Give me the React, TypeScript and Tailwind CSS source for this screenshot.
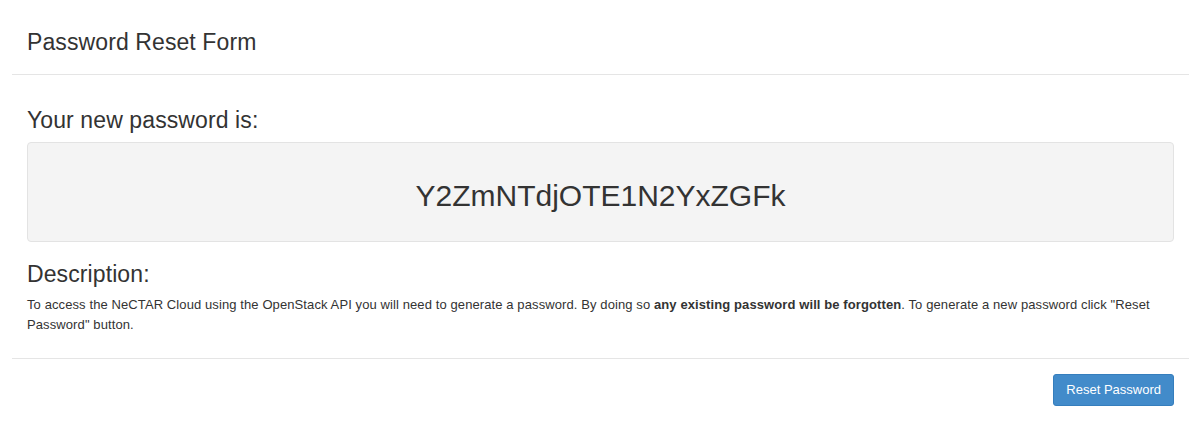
import React from "react";

export default function App() {
  return (
    <div
      className="w-full min-h-[444px] bg-white text-[#333]"
      style={{ fontFamily: '"Liberation Sans", Arial, sans-serif' }}
    >
      <div className="pt-[10px] ml-[12px] mr-[10px]">
        <div className="h-[65px] border-b border-[#e5e5e5] px-[15px] flex items-center">
          <h3 className="text-[23px] leading-[25px] font-normal tracking-[0.1px]">Password Reset Form</h3>
        </div>
        <div className="px-[15px] pt-[33px] pb-[23px]">
          <h3 className="text-[23px] leading-[25px] font-normal tracking-[0.1px]">Your new password is:</h3>
          <div className="mt-[9px] h-[100px] rounded-[4px] border border-[#e3e3e3] bg-[#f4f4f4] flex items-center justify-center pt-[7px]">
            <span className="text-[30px] leading-[33px]">Y2ZmNTdjOTE1N2YxZGFk</span>
          </div>
          <h3 className="mt-[20px] text-[23px] leading-[25px] font-normal tracking-[0.1px]">Description:</h3>
          <p className="mt-[8px] text-[13px] leading-[20px] tracking-[0.1px] pr-[20px]">
            To access the NeCTAR Cloud using the OpenStack API you will need to generate a password. By doing so{" "}
            <b className="font-bold">any existing password will be forgotten</b>. To generate a new password click "Reset
            Password" button.
          </p>
        </div>
        <div className="border-t border-[#e5e5e5] px-[15px] pt-[15px] flex justify-end">
          <button className="h-[32px] px-[12px] rounded-[3px] border border-[#357ebd] bg-[#428bca] text-white text-[13px]">
            Reset Password
          </button>
        </div>
      </div>
    </div>
  );
}
